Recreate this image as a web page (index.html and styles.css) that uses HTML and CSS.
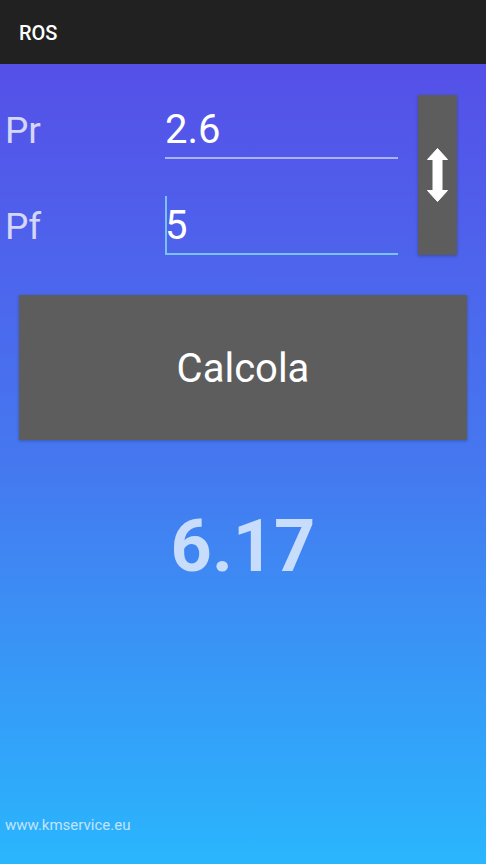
FILE: index.html
```html
<html lang="en">

<head>
    <meta charset="UTF-8">
    <meta name="viewport" content="width=device-width, initial-scale=1.0">
    <title>ROS</title>

    <link rel="stylesheet" href="styles.css">
</head>

<body>
    <div class="header">ROS</div>
    <div class="content">
        <div class="form">
            <div class="label">Pr</div>
            <div class="field">
                <input class="field-input" type="text" value="2.6" aria-label="Pr">
            </div>
            <button class="swap" type="button" aria-label="swap">
                <svg width="21" height="54" viewBox="0 0 21 54">
                    <path d="M10.5 0.5 L20.5 11.5 H15 V42.5 H20.5 L10.5 53.5 L0.5 42.5 H6 V11.5 H0.5 Z" fill="#fff" stroke="#fff" stroke-linejoin="round"/>
                </svg>
            </button>
            <div class="label">Pf</div>
            <div class="field field-focus">
                <input class="field-input" type="text" value="5" aria-label="Pf">
            </div>
        </div>
        <button class="calc" type="button">Calcola</button>
        <div class="result">6.17</div>
        <div class="footer">www.kmservice.eu</div>
    </div>
</body>

</html>
```

FILE: styles.css
```css
body {
    margin: 0;
    height: 864px;
    display: flex;
    flex-direction: column;
    font-family: Roboto, "Liberation Sans", sans-serif;
}

.header {
    height: 64px;
    background-color: #212121;
    color: white;
    font-size: 20px;
    font-weight: 500;
    padding-left: 19px;
    line-height: 66px;
    box-sizing: border-box;
}

.content {
    flex: 1;
    background: linear-gradient(#5550e8, #4578f0 50%, #2ab6fd);
    display: flex;
    flex-direction: column;
    padding-top: 31px;
}

.form {
    display: grid;
    grid-template-columns: 160px 233px 59px;
    grid-template-rows: 64px 64px;
    row-gap: 32px;
    margin-left: 5px;
}

.label {
    color: #d6d6f8;
    font-size: 37px;
    line-height: 64px;
    padding-top: 4px;
}

.field {
    position: relative;
    border-bottom: 2px solid #aab4f4;
    box-sizing: border-box;
}

.field-focus {
    border-bottom-color: #78c2f6;
}

.field-focus::before {
    content: "";
    position: absolute;
    left: 0;
    top: 5px;
    width: 2px;
    height: 57px;
    background-color: #78c2f6;
}

.field-input {
    width: 100%;
    height: 100%;
    border: none;
    background: transparent;
    outline: none;
    color: white;
    font-family: Roboto, "Liberation Sans", sans-serif;
    font-size: 40px;
    padding: 6px 0 0 0;
    box-sizing: border-box;
}

.swap {
    grid-column: 3;
    grid-row: 1 / span 2;
    margin-left: 20px;
    width: 39px;
    background-color: #5d5d5d;
    border: none;
    padding: 0;
    display: flex;
    align-items: center;
    justify-content: center;
    box-shadow: 0 1px 3px rgba(0, 0, 0, 0.25);
}

.calc {
    margin: 40px 19px 0 19px;
    height: 145px;
    background-color: #5d5d5d;
    border: none;
    color: white;
    font-family: Roboto, "Liberation Sans", sans-serif;
    font-size: 40px;
    padding-top: 2px;
    box-shadow: 0 1px 3px rgba(0, 0, 0, 0.25);
}

.result {
    text-align: center;
    color: #c8dcfc;
    font-size: 72px;
    font-weight: 700;
    line-height: 1;
    margin-top: 71px;
}

.footer {
    margin-top: auto;
    padding: 0 0 30px 5px;
    color: #c2e4fd;
    font-size: 15px;
}
```
